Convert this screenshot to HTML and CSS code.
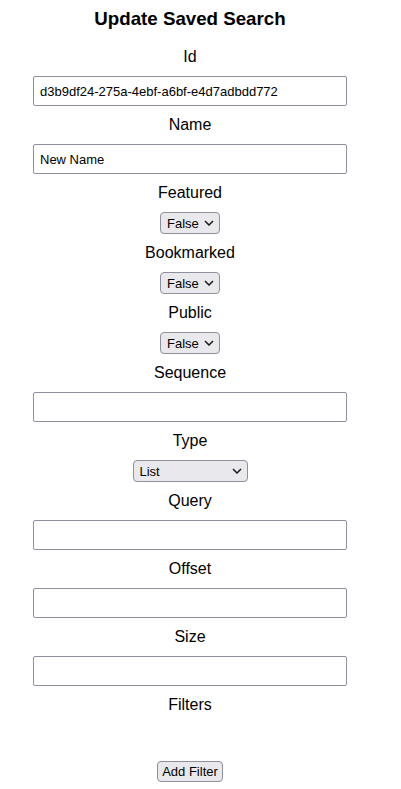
FILE: index.html
```html
<!DOCTYPE html>
<html>
<head>
<meta charset="utf-8">
<title>Update Saved Search</title>
<link rel="stylesheet" href="styles.css">
</head>
<body>
<div class="page">
  <h3 class="title">Update Saved Search</h3>
  <form class="form">
    <label class="label">Id</label>
    <input class="field" type="text" value="d3b9df24-275a-4ebf-a6bf-e4d7adbdd772">
    <label class="label">Name</label>
    <input class="field" type="text" value="New Name">
    <label class="label">Featured</label>
    <span class="select-wrap sel-bool">
      <select class="select"><option>False</option><option>True</option></select>
      <svg class="chev" width="10" height="6" viewBox="0 0 10 6"><path d="M1 1 L5 5 L9 1" fill="none" stroke="#1a1a1a" stroke-width="1.5"/></svg>
    </span>
    <label class="label">Bookmarked</label>
    <span class="select-wrap sel-bool">
      <select class="select"><option>False</option><option>True</option></select>
      <svg class="chev" width="10" height="6" viewBox="0 0 10 6"><path d="M1 1 L5 5 L9 1" fill="none" stroke="#1a1a1a" stroke-width="1.5"/></svg>
    </span>
    <label class="label">Public</label>
    <span class="select-wrap sel-bool">
      <select class="select"><option>False</option><option>True</option></select>
      <svg class="chev" width="10" height="6" viewBox="0 0 10 6"><path d="M1 1 L5 5 L9 1" fill="none" stroke="#1a1a1a" stroke-width="1.5"/></svg>
    </span>
    <label class="label">Sequence</label>
    <input class="field" type="text" value="">
    <label class="label">Type</label>
    <span class="select-wrap sel-type">
      <select class="select"><option>List</option><option>Grid</option></select>
      <svg class="chev" width="10" height="6" viewBox="0 0 10 6"><path d="M1 1 L5 5 L9 1" fill="none" stroke="#1a1a1a" stroke-width="1.5"/></svg>
    </span>
    <label class="label">Query</label>
    <input class="field" type="text" value="">
    <label class="label">Offset</label>
    <input class="field" type="text" value="">
    <label class="label">Size</label>
    <input class="field" type="text" value="">
    <label class="label">Filters</label>
    <div class="filter-list"></div>
    <div class="actions">
      <button class="btn" type="button">Add Filter</button>
    </div>
  </form>
</div>
</body>
</html>
```

FILE: styles.css
```css
html, body {
  background: #ffffff;
}
body {
  margin: 8px;
  font-family: "Liberation Sans", Arial, sans-serif;
  color: #000000;
}
.page {
  width: 364px;
  text-align: center;
}
.title {
  margin: 0 0 18.5px 0;
  font-size: 18.72px;
  font-weight: bold;
  line-height: 21.5px;
}
.form {
  margin: 0;
}
.label {
  display: block;
  margin: 10px 0;
  font-size: 16px;
  line-height: 18px;
}
.field {
  display: block;
  box-sizing: border-box;
  width: 314px;
  height: 30px;
  margin: 0 auto;
  padding: 0 6px;
  border: 1px solid #8f8f9d;
  border-radius: 2px;
  background: #ffffff;
  font-family: "Liberation Sans", Arial, sans-serif;
  font-size: 13px;
  color: #000000;
  outline: none;
}
.select-wrap {
  display: block;
  position: relative;
  margin: 0 auto;
  height: 22px;
}
.sel-bool {
  width: 60px;
}
.sel-type {
  width: 115px;
}
.select {
  -webkit-appearance: none;
  appearance: none;
  box-sizing: border-box;
  width: 100%;
  height: 22px;
  margin: 0;
  padding: 0 0 0 6px;
  border: 1px solid #8f8f9d;
  border-radius: 4px;
  background: #e9e9ed;
  font-family: "Liberation Sans", Arial, sans-serif;
  font-size: 13px;
  color: #000000;
  text-align: left;
  outline: none;
}
.chev {
  position: absolute;
  right: 6px;
  top: 8px;
  pointer-events: none;
}
.filter-list {
  height: 27px;
}
.actions {
  margin-top: 10px;
}
.btn {
  box-sizing: border-box;
  height: 21px;
  margin: 0;
  padding: 0 4px;
  border: 1px solid #8f8f9d;
  border-radius: 4px;
  background: #e9e9ed;
  font-family: "Liberation Sans", Arial, sans-serif;
  font-size: 13px;
  color: #000000;
}
```
